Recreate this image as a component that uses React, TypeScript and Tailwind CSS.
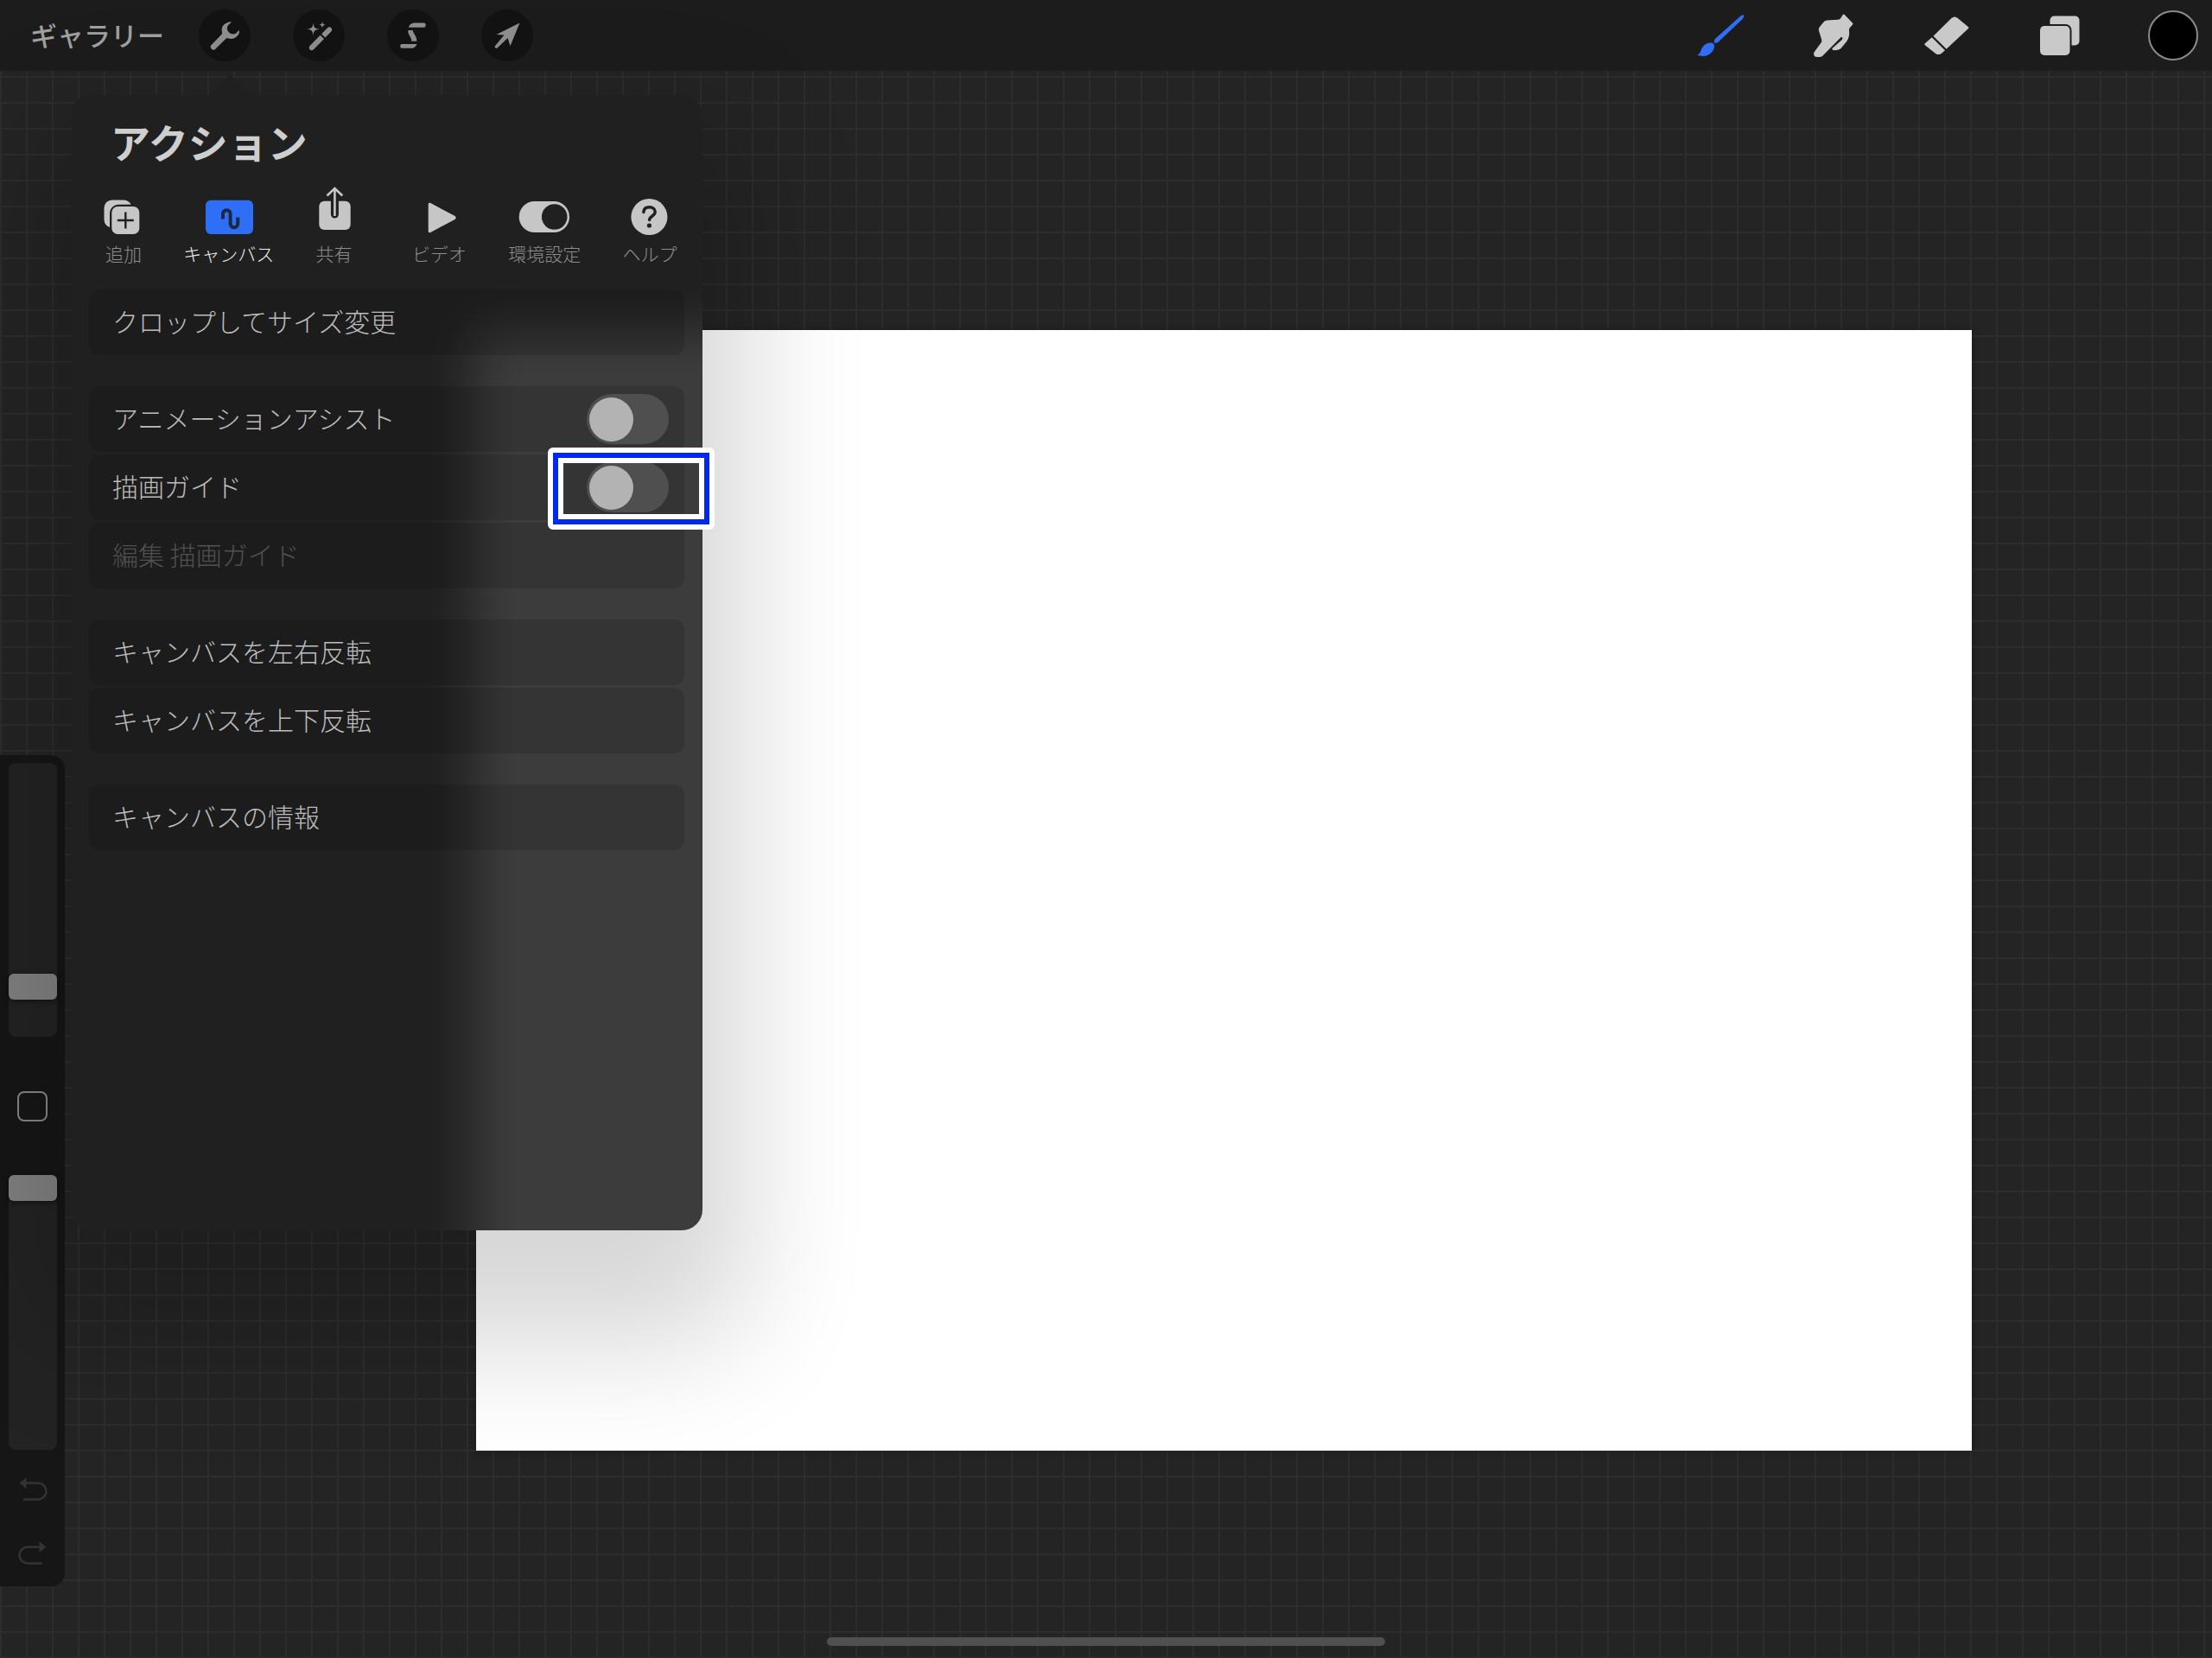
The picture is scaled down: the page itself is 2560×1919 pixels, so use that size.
import { useState } from 'react';
import type { ReactNode } from 'react';

const Icon = ({ children }: { children: ReactNode }) => (
  <svg viewBox="0 0 60 60" className="size-15" fill="currentColor" aria-hidden="true">
    {children}
  </svg>
);

const leftTools = [
  {
    name: 'wrench',
    icon: (
      <path d="M36.5 14.2C30 15.5 26.500 19 26.700 23.500c0 2.500 0.800 3.300 0 5L14.200 41.500c-1.500 2 0.500 5.500 3 5.200 1 0 2-0.800 2.800-1.800L31.500 33.700c1.500-1 3.500 0.500 6 0.300 5-0.400 9.200-4 9.500-8.500 0-1.200-0.500-1.500-1.200-0.700l-2.600 2.700c-1.800 1.300-4.800 1.300-6.500 0.300-2.500-1.600-3.800-3.600-3.900-5.800 0-3 1.500-4.300 4.200-6.500 0.900-0.700 0.500-1.500-0.500-1.300z" />
    ),
  },
  {
    name: 'wand',
    icon: (
      <>
        <path d="M23.500 15c0.500 5.800 1.300 7 7.500 7.700-6.200 0.700-7 1.900-7.500 7.700-0.500-5.800-1.300-7-7.500-7.700 6.200-0.700 7-1.900 7.500-7.700z" />
        <path d="M34 13.500c0.300 3 0.900 3.800 3.600 4.200-2.700 0.400-3.300 1.200-3.600 4.200-0.300-3-0.900-3.800-3.600-4.200 2.700-0.400 3.300-1.200 3.600-4.200z" />
        <path d="M31.600 29.700l4.400 4.400L24 46.200c-1.300 1.300-3.200 1.300-4.400 0.200s-1.200-3.200 0-4.500z" />
        <path d="M33.100 28.200l6.900-6.900c1.300-1.300 3.200-1.200 4.300 0s1.200 3 0 4.300l-6.900 6.900z" />
      </>
    ),
  },
  {
    name: 'selection',
    icon: (
      <>
        <path d="M24.800 20.700c1-3 3.200-5.100 6.500-5.100h11.500c2.500 0 2.500 5.100 0 5.100z" />
        <path d="M24.300 24h5.500c-0.500 3 4.500 6 4.600 12.800h-6.200c0.500-4.800-4.500-7.300-3.900-12.800z" />
        <path d="M17 40h17.400c-1 3-3 4.800-6.200 4.800H17c-2.400 0-2.400-4.800 0-4.800z" />
      </>
    ),
  },
  {
    name: 'transform',
    icon: (
      <path d="M44.500 15.500L33.500 42.200 30.600 33 18.600 44.500c-2 1-3.600-0.700-2.700-2.200L26.500 29.600 17.500 29z" />
    ),
  },
];

const rightTools = [
  {
    name: 'brush',
    color: 'text-[#2f6ff8]',
    icon: (
      <>
        <path d="M56.600 6.500c0.900 0.900 0.500 2.800-0.700 4.200L28 37.200c-2.300 2-5.300 2-5.200 0 0-1.500 0.600-2.600 1.600-3.800L51.800 9c2-1.700 4-3.200 4.800-2.500z" />
        <path d="M19.500 38.500c2.500 0.300 3.800 1.800 3.500 4.500-0.500 6-6.500 11-13 11-2.700 0-5-0.400-6.800-1.400 2.600-0.900 3.300-2.400 4.300-5.100 1.700-5 6-9.500 12-9z" />
      </>
    ),
  },
  {
    name: 'smudge',
    color: 'text-[#c9c9c9]',
    icon: (
      <path d="M42.500 5.700l9.700 10c0.500 0.800 0 1.700-1 2.800-2.200 2-3.200 3.500-3.200 5.500 0.700 5-0.200 9.500-3 13.300L38.500 45c-2 2-7 2.700-9.500 1.700-1-0.500-0.700-1.500 0-2.200L39.700 35c0.800-1 1-2.200 0.200-2.700-0.700-0.500-1.500-0.200-2.200 0.600L17 54c-1.700 1.200-7.500 1.300-9 0-1-1-1.200-3.400-0.500-4.500l8-11c1-1.500 1-2.500 0.400-4.500L13 24.500c-0.400-2 0-3 1-4.500l5-6c1-1 2-1.500 3.400-1.600L35 11.700c1.500-0.200 2.500-0.700 3.300-1.700l2.500-4c0.500-0.700 1.200-0.800 1.700-0.300z" />
    ),
  },
  {
    name: 'erase',
    color: 'text-[#c9c9c9]',
    icon: (
      <>
        <path d="M14.500 30.700L35.500 10c2.300-2 5-2 7.200 0L55 20.300c0.600 0.700 0.500 1.300 0 1.800L29.600 45.700z" />
        <path d="M12.800 32.200L28 47.200l-4 3.500c-2.300 1.900-5.500 1.700-7.500-0.200L4.800 41.300c-0.600-0.700-0.600-1.300 0-2z" />
      </>
    ),
  },
  {
    name: 'layers',
    color: 'text-[#c9c9c9]',
    icon: (
      <>
        <rect x="18.500" y="7.500" width="34" height="34" rx="5" />
        <rect x="5.500" y="17" width="38" height="37.500" rx="7" fill="#1c1c1c" />
        <rect x="7" y="19" width="34.500" height="34" rx="5" />
      </>
    ),
  },
];

const tabs = [
  {
    label: '追加',
    icon: (
      <>
        <rect x="9.500" y="19.500" width="32" height="32" rx="9" />
        <rect x="16" y="24.700" width="37" height="37" rx="10" fill="#202020" />
        <rect x="18.300" y="27" width="32" height="32" rx="7" />
        <path d="M34.300 33.500v19M24.800 43h19" stroke="#202020" strokeWidth="2.400" />
      </>
    ),
  },
  {
    label: 'キャンバス',
    icon: (
      <>
        <rect x="5" y="19.700" width="55" height="39.300" rx="6" fill="#2f6ff8" />
        <path
          d="M25 41.500v-6a4.300 4.300 0 0 1 8.600 0V47a4.300 4.300 0 0 0 8.600 0v-7.500"
          fill="none"
          stroke="#1d2740"
          strokeWidth="4"
        />
      </>
    ),
  },
  {
    label: '共有',
    icon: (
      <>
        <rect x="14.300" y="20.700" width="36.400" height="33.300" rx="6" />
        <path d="M32.400 14v22" stroke="#202020" strokeWidth="9" strokeLinecap="round" />
        <path
          d="M32.400 38V6.500M23.500 14.500l8.900-8.500 8.900 8.500"
          fill="none"
          stroke="currentColor"
          strokeWidth="2.600"
        />
      </>
    ),
  },
  {
    label: 'ビデオ',
    icon: <path d="M19.700 24.500c0-1.700 1.200-2.200 2.600-1.400L50.500 38c1.600 1 1.600 3 0 4L22.300 56.900c-1.400 0.800-2.600 0.300-2.600-1.400z" />,
  },
  {
    label: '環境設定',
    icon: (
      <>
        <rect x="2.700" y="21" width="58.300" height="36" rx="18" />
        <circle cx="43.700" cy="39" r="14.800" fill="#202020" />
      </>
    ),
  },
  {
    label: 'ヘルプ',
    icon: (
      <>
        <circle cx="31.400" cy="39" r="21" />
        <path
          d="M24.800 33.500c0.300-4 3-5.800 6.700-5.800 4 0 6.700 2.200 6.700 5.600 0 4.700-6.600 4.700-6.600 9.300"
          fill="none"
          stroke="#202020"
          strokeWidth="3.400"
          strokeLinecap="round"
        />
        <circle cx="31.400" cy="49" r="2.600" fill="#202020" />
      </>
    ),
  },
];

const rowClass = 'relative flex h-19 w-full items-center rounded-xl bg-black/12 pl-[27px] pr-[18px] text-left';

const Row = ({ label, disabled = false }: { label: string; disabled?: boolean }) => (
  <button type="button" disabled={disabled} className={`${rowClass} disabled:text-[#505050]`}>
    <span className="pb-1">{label}</span>
  </button>
);

const ToggleRow = ({ label, children }: { label: string; children?: ReactNode }) => {
  const [on, setOn] = useState(false);

  return (
    <label className={`${rowClass} justify-between`}>
      <span className="pb-1">{label}</span>
      <input
        type="checkbox"
        checked={on}
        onChange={() => setOn(!on)}
        className="flex h-[58px] w-[95px] appearance-none items-center rounded-full bg-[#4f4f4f] px-[3px] before:size-[51px] before:rounded-full before:bg-[#b3b3b3] checked:justify-end checked:bg-[#2f6ff8]"
      />
      {children}
    </label>
  );
};

const sliderClass =
  'w-14 appearance-none rounded-lg bg-[#232323] [writing-mode:vertical-lr] [direction:rtl] [&::-webkit-slider-thumb]:h-[30px] [&::-webkit-slider-thumb]:w-14 [&::-webkit-slider-thumb]:appearance-none [&::-webkit-slider-thumb]:rounded-md [&::-webkit-slider-thumb]:bg-[#808080] [&::-webkit-slider-thumb]:shadow-[0_2px_6px_rgba(0,0,0,0.5)]';

const Header = () => (
  <header className="flex h-[82px] items-center justify-between bg-[#1c1c1c] pl-[35px] pr-[15px]">
    <div className="flex items-center gap-[49px]">
      <button type="button" className="-mr-[9px] pb-0.5 text-[31px] leading-10 font-medium text-[#a0a0a0]">
        ギャラリー
      </button>
      {leftTools.map((tool) => (
        <button
          key={tool.name}
          type="button"
          aria-label={tool.name}
          className="size-15 rounded-full bg-[#131313] text-[#8f8f8f]"
        >
          <Icon>{tool.icon}</Icon>
        </button>
      ))}
    </div>
    <div className="flex items-center gap-[71px]">
      {rightTools.map((tool) => (
        <button key={tool.name} type="button" aria-label={tool.name} className={tool.color}>
          <Icon>{tool.icon}</Icon>
        </button>
      ))}
      <button type="button" aria-label="color" className="flex size-15 items-center justify-center">
        <span className="size-[58px] rounded-full border-2 border-[#8a8a8a] bg-black"></span>
      </button>
    </div>
  </header>
);

const Sidebar = () => (
  <aside className="absolute top-[792px] left-0 flex h-[962px] w-[75px] flex-col items-center rounded-r-2xl bg-[#161616] pt-[9px]">
    <input type="range" aria-label="size" defaultValue={15} className={`${sliderClass} h-[317px]`} />
    <button
      type="button"
      aria-label="modify"
      className="mt-[63px] size-[35px] rounded-lg border-2 border-[#868686]"
    ></button>
    <input type="range" aria-label="opacity" defaultValue={100} className={`${sliderClass} mt-[62px] h-[318px]`} />
    <button type="button" aria-label="undo" className="mt-[26px] text-[#333333]">
      <svg viewBox="0 0 40 40" className="size-10" fill="none" stroke="currentColor" strokeWidth="2.400">
        <path d="M11 12.500h15a9.500 9.500 0 0 1 0 19H9" />
        <path d="M4.500 12.500l8-6.500v13z" fill="currentColor" stroke="none" />
      </svg>
    </button>
    <button type="button" aria-label="redo" className="mt-[34px] text-[#333333]">
      <svg viewBox="0 0 40 40" className="size-10" fill="none" stroke="currentColor" strokeWidth="2.400">
        <path d="M29 12.500H14a9.500 9.500 0 0 0 0 19h17" />
        <path d="M35.500 12.500l-8-6.500v13z" fill="currentColor" stroke="none" />
      </svg>
    </button>
  </aside>
);

const ActionsPanel = () => (
  <section className="absolute top-7 left-[82px] h-[1314px] w-[731px] rounded-3xl bg-[#202020] pt-7 shadow-[0_80px_140px_52px_rgba(0,0,0,0.16)]">
    <div className="absolute -top-6 left-[160px] h-6 w-12 bg-[#202020] [clip-path:polygon(50%_0,100%_100%,0_100%)]"></div>

    {/* Canvas showing through the frosted panel */}
    <div className="pointer-events-none absolute inset-0 overflow-hidden rounded-3xl">
      <div className="absolute top-[272px] -right-32 -bottom-32 left-[465px] bg-white/13 blur-[30px]"></div>
    </div>

    <div className="relative">
      <h1 className="pl-[46px] text-[46px] leading-[50px] font-bold text-[#cecece]">アクション</h1>

      <div className="mt-6 grid grid-cols-6">
        {tabs.map((tab) => (
          <button key={tab.label} type="button" className="flex flex-col items-center gap-[3px] text-[#c6c6c6]">
            <svg viewBox="0 0 64 64" className="size-16" fill="currentColor" aria-hidden="true">
              {tab.icon}
            </svg>
            <span
              className={`text-[21px] leading-7 font-light whitespace-nowrap ${
                tab.label === 'キャンバス' ? 'text-[#f0f0f0]' : 'text-[#8c8c8c]'
              }`}
            >
              {tab.label}
            </span>
          </button>
        ))}
      </div>

      <div className="mt-7 flex flex-col gap-9 px-[21px] text-[30px] leading-10 font-light text-[#bcbcbc]">
        <Row label="クロップしてサイズ変更" />
        <div className="flex flex-col gap-[3px]">
          <ToggleRow label="アニメーションアシスト" />
          <ToggleRow label="描画ガイド">
            {/* Callout around the drawing guide switch */}
            <span className="pointer-events-none absolute -top-2 -right-[35px] z-10 h-[95px] w-[193px] rounded-md border-6 border-white">
              <span className="block h-full border-6 border-[#0028f0]">
                <span className="block h-full border-6 border-white"></span>
              </span>
            </span>
          </ToggleRow>
          <Row label="編集 描画ガイド" disabled />
        </div>
        <div className="flex flex-col gap-[3px]">
          <Row label="キャンバスを左右反転" />
          <Row label="キャンバスを上下反転" />
        </div>
        <Row label="キャンバスの情報" />
      </div>
    </div>
  </section>
);

const App = () => {
  return (
    <div
      lang="ja"
      className="flex min-h-screen flex-col bg-[#242424] font-['Noto_Sans_CJK_JP','Noto_Sans',sans-serif]"
    >
      <Header />
      <main className="relative flex flex-1 bg-[linear-gradient(#2d2d2d_2px,transparent_2px),linear-gradient(90deg,#2d2d2d_2px,transparent_2px)] bg-[size:30px_30px] bg-[position:0_6px] pt-[300px] pr-[278px] pb-[240px] pl-[551px]">
        <div className="flex-1 bg-white shadow-[0_0_8px_rgba(0,0,0,0.3)]"></div>
        <Sidebar />
        <ActionsPanel />
        <div className="absolute bottom-3.5 left-1/2 h-2.5 w-[646px] -translate-x-1/2 rounded-full bg-[#505050]"></div>
      </main>
    </div>
  );
};

export default App;
